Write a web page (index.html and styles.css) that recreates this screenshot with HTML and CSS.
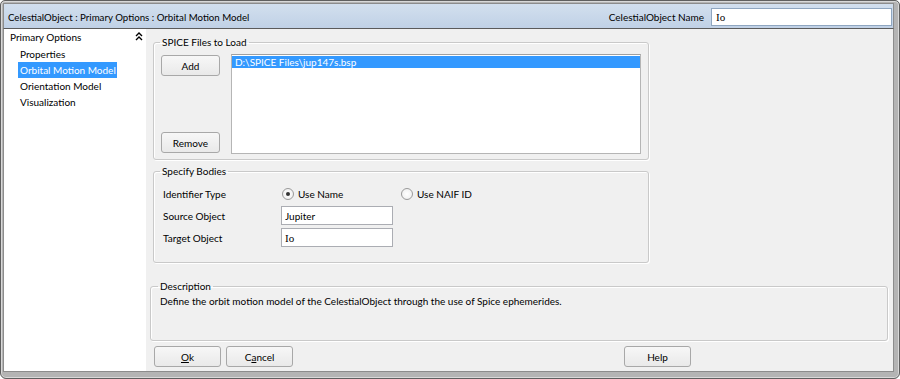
FILE: index.html
```html
<!DOCTYPE html>
<html>
<head>
<meta charset="utf-8">
<link rel="stylesheet" href="styles.css">
</head>
<body>
<div class="window">
  <div class="titlebar">
    <span class="title">CelestialObject : Primary Options : Orbital Motion Model</span>
    <span class="name-label">CelestialObject Name</span>
    <input class="name-input" type="text" value="Io">
  </div>
  <div class="main">
    <div class="sidebar">
      <div class="tree-head">
        <span>Primary Options</span>
        <svg class="chev" width="8" height="9" viewBox="0 0 8 9"><path d="M1 4 L4 1 L7 4 M1 8 L4 5 L7 8" fill="none" stroke="#000" stroke-width="1.4"/></svg>
      </div>
      <div class="tree-item">Properties</div>
      <div class="tree-item selected">Orbital Motion Model</div>
      <div class="tree-item">Orientation Model</div>
      <div class="tree-item">Visualization</div>
    </div>
    <div class="content">
      <fieldset class="group spice">
        <legend>SPICE Files to Load</legend>
        <div class="spice-row">
          <div class="btn-col">
            <button class="btn">Add</button>
            <button class="btn">Remove</button>
          </div>
          <div class="listbox">
            <div class="list-item selected">D:\SPICE Files\jup147s.bsp</div>
          </div>
        </div>
      </fieldset>
      <fieldset class="group bodies">
        <legend>Specify Bodies</legend>
        <div class="form">
          <span class="lbl">Identifier Type</span>
          <div class="radios">
            <label class="radio"><span class="dot on"></span>Use Name</label>
            <label class="radio"><span class="dot"></span>Use NAIF ID</label>
          </div>
          <span class="lbl">Source Object</span>
          <input class="field" type="text" value="Jupiter">
          <span class="lbl">Target Object</span>
          <input class="field serif" type="text" value="Io">
        </div>
      </fieldset>
      <fieldset class="group desc">
        <legend>Description</legend>
        <p class="desc-text">Define the orbit motion model of the CelestialObject through the use of Spice ephemerides.</p>
      </fieldset>
      <div class="actions">
        <button class="btn wide"><u>O</u>k</button>
        <button class="btn wide">C<u>a</u>ncel</button>
        <span class="spacer"></span>
        <button class="btn wide">Help</button>
      </div>
    </div>
  </div>
</div>
</body>
</html>
```
FILE: styles.css
```css
* { box-sizing: border-box; }
html, body { margin: 0; padding: 0; background: #fff; }
body {
  font-family: "Lato", "Open Sans", sans-serif;
  font-size: 10px;
  color: #000;
}
.window {
  width: 900px;
  height: 379px;
  border: 1px solid #5f5f5f;
  border-radius: 5px 5px 6px 6px;
  background: #b4b4b4;
  padding: 2px 5px 6px 2px;
  display: flex;
  flex-direction: column;
  box-shadow: inset 0 0 0 1px #d9d9d9;
}
.titlebar {
  height: 26px;
  flex-shrink: 0;
  display: flex;
  align-items: center;
  background: linear-gradient(#d2dfee, #c0d1e6);
  border: 1px solid #8c8c8c;
  border-bottom: 1px solid #5b5b5b;
  padding-left: 4px;
  padding-right: 1px;
  padding-top: 1px;
}
.title { flex: 1; font-size: 9.7px; }
.name-label { margin-right: 7px; }
.name-input {
  width: 181px;
  height: 18px;
  border: 1px solid #8fa6c0;
  background: #fff;
  padding: 0 4px;
  font-family: "Liberation Serif", serif;
  font-size: 11px;
}
.main {
  flex: 1;
  display: flex;
  border-left: 1px solid #8c8c8c;
  border-right: 1px solid #8c8c8c;
  border-bottom: 1px solid #8c8c8c;
  min-height: 0;
}
.sidebar {
  width: 142px;
  flex-shrink: 0;
  background: #fff;
}
.tree-head {
  display: flex;
  justify-content: space-between;
  align-items: center;
  height: 16px;
  padding-left: 6px;
  padding-right: 3px;
}
.chev { margin-top: -2px; }
.tree-item {
  margin-left: 14px;
  height: 16px;
  line-height: 16px;
  padding-left: 2px;
  white-space: nowrap;
}
.tree-head + .tree-item { margin-top: 1px; }
.tree-item.selected {
  background: #3399ff;
  color: #fff;
  width: 99px;
}
.content {
  flex: 1;
  min-width: 0;
  background: #f0f0f0;
  padding: 6px 5px 0 4px;
  display: flex;
  flex-direction: column;
}
.group {
  margin: 0;
  border: 1px solid #c9c9c9;
  border-radius: 3px;
  box-shadow: inset 1px 1px 0 #fff, 1px 1px 0 #fff;
  min-width: 0;
}
.group legend {
  padding: 0 2px;
  line-height: 15px;
}
.spice {
  margin-left: 3px;
  width: 496px;
  padding: 4px 7px 5px 7px;
}
.spice legend { margin-left: -1px; }
.spice-row {
  display: flex;
  gap: 11px;
  height: 100px;
}
.btn-col {
  display: flex;
  flex-direction: column;
  justify-content: space-between;
  padding-top: 1px;
  padding-bottom: 1px;
}
.btn {
  width: 59px;
  height: 21px;
  border: 1px solid #a8a8a8;
  border-radius: 3px;
  background: linear-gradient(#f7f7f7, #e9e9e9);
  font: inherit;
  color: #000;
  padding: 0;
}
.btn.wide { width: 67px; }
.listbox {
  flex: 1;
  background: #fff;
  border: 1px solid #b5b5b5;
  border-top-color: #a0a0a0;
  padding: 1px 0 0 0;
}
.list-item {
  height: 12px;
  line-height: 12px;
  padding-left: 3px;
}
.list-item.selected { background: #3399ff; color: #fff; }
.bodies {
  margin-left: 3px;
  margin-top: 4px;
  width: 496px;
  padding: 5px 7px 15px 9px;
}
.bodies legend { margin-left: -3px; }
.form {
  display: grid;
  grid-template-columns: 118px 260px;
  grid-template-rows: 19px 19px 19px;
  row-gap: 3px;
  align-items: center;
}
.radios { display: flex; align-items: center; }
.radio { display: flex; align-items: center; gap: 4px; margin-left: 1px; width: 118px; }
.dot {
  width: 12px;
  height: 12px;
  border-radius: 50%;
  border: 1px solid #9a9a9a;
  background: radial-gradient(#ffffff, #ececec);
  display: inline-flex;
  align-items: center;
  justify-content: center;
}
.dot.on::after {
  content: "";
  width: 4px;
  height: 4px;
  border-radius: 50%;
  background: #333;
}
.field {
  width: 112px;
  height: 19px;
  border: 1px solid #abadb3;
  background: #fff;
  padding: 0 3px;
  font: inherit;
}
.field.serif {
  font-family: "Liberation Serif", serif;
  font-size: 11px;
}
.desc {
  margin-top: 16px;
  width: 738px;
  height: 62px;
  padding: 0 8px 0 9px;
}
.desc legend { margin-left: -2px; }
.desc-text { margin: 0; line-height: 15px; }
.actions {
  display: flex;
  gap: 5px;
  margin-top: 5px;
  padding-left: 4px;
  width: 541px;
}
.spacer { flex: 1; }
u { text-decoration: underline; }
```
